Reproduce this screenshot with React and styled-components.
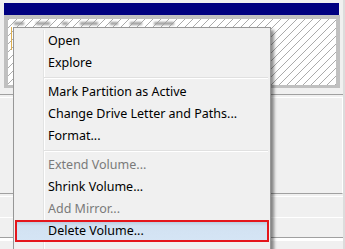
import styled, { createGlobalStyle } from 'styled-components'

const GlobalStyle = createGlobalStyle`
    html, body {
        margin: 0;
        padding: 0;
        background: #f0f0f0;
        overflow: hidden;
    }
    #root {
        width: 345px;
        height: 249px;
        overflow: hidden;
    }
`

const items = [
    { label: 'Open' },
    { label: 'Explore' },
    { sep: true },
    { label: 'Mark Partition as Active' },
    { label: 'Change Drive Letter and Paths...' },
    { label: 'Format...' },
    { sep: true },
    { label: 'Extend Volume...', disabled: true },
    { label: 'Shrink Volume...' },
    { label: 'Add Mirror...', disabled: true },
    { label: 'Delete Volume...', active: true },
]

export default function App() {
    return (
        <Screen>
            <GlobalStyle />
            <Main>
                <Volume>
                    <TitleBar />
                    <Frame>
                        <Smudges>
                            {[10, 14, 6, 18, 8, 12, 20].map((w, i) => (
                                <Smudge key={i} w={w} />
                            ))}
                        </Smudges>
                        <FocusMark />
                    </Frame>
                </Volume>
                <Lower>
                    <TopRule />
                    <DiskRow />
                    <ThinRow />
                    <LastRow />
                </Lower>
            </Main>
            <EdgeStrip />

            <Menu>
                {items.map((it, i) =>
                    it.sep ? (
                        <Separator key={i} />
                    ) : (
                        <Item key={i} disabled={it.disabled} active={it.active}>
                            {it.label}
                        </Item>
                    )
                )}
            </Menu>
        </Screen>
    )
}

//스타일
const Screen = styled.div`
    position: relative;
    width: 345px;
    height: 249px;
    display: flex;
    background: #f0f0f0;
    font-family: "Noto Sans", "Open Sans", sans-serif;
    overflow: hidden;
`

const Main = styled.div`
    width: 343px;
    padding-top: 3px;
`

const EdgeStrip = styled.div`
    width: 2px;
    background: #dcdcdc;
`

const Volume = styled.div`
    margin-left: 4px;
    width: 336px;
`

const TitleBar = styled.div`
    width: 335px;
    height: 12px;
    background: #000080;
`

const Frame = styled.div`
    height: 66px;
    border: 4px solid #c0c0c0;
    border-bottom-width: 3px;
    background: repeating-linear-gradient(135deg, #ababab 0 1px, #ffffff 1px 5.66px);
`

const Smudges = styled.div`
    display: flex;
    gap: 12px;
    padding: 3px 0 0 6px;
    height: 5px;
`

const Smudge = styled.div`
    width: ${(p) => p.w}px;
    height: 3px;
    background: #9a9a9a;
    filter: blur(1px);
`

const FocusMark = styled.div`
    margin: 0 0 0 3px;
    width: 1px;
    height: 23px;
    background: #e0b050;
`

const Lower = styled.div`
    display: flex;
    flex-direction: column;
`

const TopRule = styled.div`
    height: 6px;
    border-bottom: 1px solid #a0a0a0;
`

const DiskRow = styled.div`
    margin-top: 2px;
    height: 95px;
    border-top: 1px solid #ffffff;
    border-right: 1px solid #ffffff;
    border-bottom: 1px solid #a0a0a0;
`

const ThinRow = styled.div`
    margin-top: 2px;
    height: 20px;
    border-top: 1px solid #ffffff;
    border-bottom: 1px solid #ffffff;
`

const LastRow = styled.div`
    height: 19px;
    border-bottom: 1px solid #a0a0a0;
    box-shadow: 0 3px 0 #ffffff;
`

const Menu = styled.div`
    position: absolute;
    left: 13px;
    top: 27px;
    width: 258px;
    height: 232px;
    box-sizing: border-box;
    padding: 2px;
    border: 1px solid #979797;
    background: #f0f0f0;
    box-shadow: 3px 3px 3px rgba(0, 0, 0, 0.45);

    &::before {
        content: '';
        position: absolute;
        left: 29px;
        top: 2px;
        bottom: 0;
        width: 1px;
        background: #e2e3e3;
    }
    &::after {
        content: '';
        position: absolute;
        left: 30px;
        top: 2px;
        bottom: 0;
        width: 1px;
        background: #ffffff;
    }
`

const Item = styled.div`
    position: relative;
    z-index: 1;
    height: 22px;
    line-height: 22px;
    padding-left: 32px;
    font-size: 12.5px;
    color: ${(p) => (p.disabled ? '#7a7a7a' : '#000000')};
    white-space: nowrap;
    background: ${(p) =>
        p.active
            ? 'linear-gradient(to bottom, #a9bdd1 0, #c2d4e6 3px, #d2e2f2 6px, #d5e5f5 100%)'
            : 'transparent'};

    ${(p) =>
        p.active &&
        `
        &::after {
            content: '';
            position: absolute;
            top: 0;
            bottom: 0;
            left: -1px;
            right: -1px;
            border: 2px solid #e4161c;
        }
    `}
`

const Separator = styled.div`
    position: relative;
    z-index: 1;
    height: 7px;
    margin-left: 28px;
    display: flex;
    align-items: center;

    &::before {
        content: '';
        flex: 1;
        height: 0;
        border-top: 1px solid #e0e0e0;
        border-bottom: 1px solid #ffffff;
    }
`
